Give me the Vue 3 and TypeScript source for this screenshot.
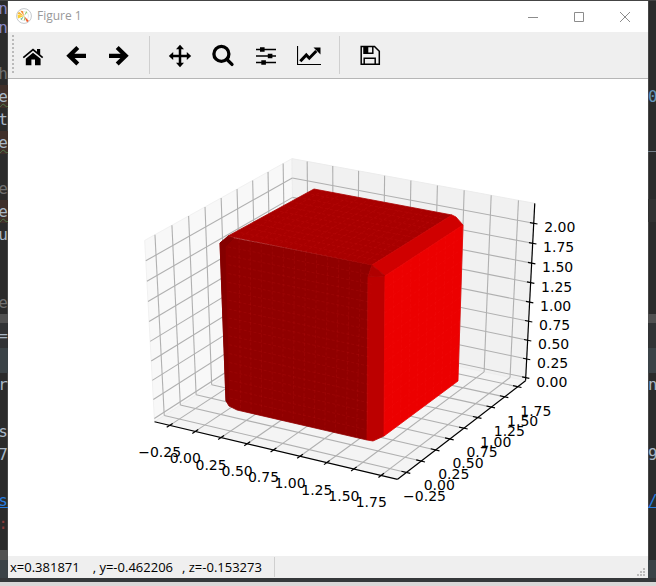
<script setup lang="ts">
type Pt = [number, number]
type Vec = [number, number, number]
interface Line { a: Pt; b: Pt }
interface Label { x: number; y: number; text: string }
interface Row { h: number; text?: string; tone?: string }

// Camera of the 3D axes (unit cube, perspective distance 10)
const azim = (-60.5 * Math.PI) / 180
const elev = (30 * Math.PI) / 180
const dist = 10

function project([x, y, z]: Vec): Pt {
  const [px, py, pz] = [x - 0.5, y - 0.5, z - 0.5]
  const ca = Math.cos(azim), sa = Math.sin(azim)
  const ce = Math.cos(elev), se = Math.sin(elev)
  const right = -sa * px + ca * py
  const up = -ca * se * px - sa * se * py + ce * pz
  const depth = dist - (ca * ce * px + sa * ce * py + se * pz)
  return [335 + (2790 * right) / depth, 234.5 - (2070 * up) / depth]
}

const step = 0.1088
const xyTicks = [-0.25, 0, 0.25, 0.5, 0.75, 1, 1.25, 1.5, 1.75]
const zTicks = [0, 0.25, 0.5, 0.75, 1, 1.25, 1.5, 1.75, 2]
const xyPos = xyTicks.map((_, i) => 0.065 + i * step)
const zPos = zTicks.map((_, i) => 0.019 + i * 0.1092)
const fmt = (v: number) => (v < 0 ? '\u2212' : '') + Math.abs(v).toFixed(2)
const points = (list: Pt[]) => list.map((p) => p.join(',')).join(' ')
const line = (a: Vec, b: Vec): Line => ({ a: project(a), b: project(b) })

const panes = [
  { cls: 'pane-left', pts: points(([[0, 0, 0], [0, 1, 0], [0, 1, 1], [0, 0, 1]] as Vec[]).map(project)) },
  { cls: 'pane-back', pts: points(([[0, 1, 0], [1, 1, 0], [1, 1, 1], [0, 1, 1]] as Vec[]).map(project)) },
  { cls: 'pane-floor', pts: points(([[0, 0, 0], [1, 0, 0], [1, 1, 0], [0, 1, 0]] as Vec[]).map(project)) },
]

const grid: Line[] = [
  ...xyPos.flatMap((t) => [
    line([t, 0, 0], [t, 1, 0]),
    line([t, 1, 0], [t, 1, 1]),
    line([0, t, 0], [1, t, 0]),
    line([0, t, 0], [0, t, 1]),
  ]),
  ...zPos.flatMap((t) => [line([0, 0, t], [0, 1, t]), line([0, 1, t], [1, 1, t])]),
]

const axes: Line[] = [
  line([0, 0, 0], [1, 0, 0]),
  line([1, 0, 0], [1, 1, 0]),
  line([1, 1, 0], [1, 1, 1]),
]

const ticks: Line[] = [
  ...xyPos.map((t) => line([t, -0.02, 0], [t, 0.02, 0])),
  ...xyPos.map((t) => line([0.98, t, 0], [1.015, t, 0])),
  ...zPos.map((t) => line([0.985, 1, t], [1.015, 1, t])),
]

const labelAt = (p: Vec, dx: number, dy: number, v: number): Label => {
  const [x, y] = project(p)
  return { x: x + dx, y: y + dy, text: fmt(v) }
}
const labels: Label[] = [
  ...xyTicks.map((v, i) => labelAt([xyPos[i], 0, 0], -10, 32, v)),
  ...xyTicks.map((v, i) => labelAt([1, xyPos[i], 0], 18, 29, v)),
  ...zTicks.map((v, i) => labelAt([1, 1, zPos[i]], 26, 9, v)),
]

// Faces of the rounded solid
const faces: { cls: string; pts: Pt[] }[] = [
  { cls: 'face front', pts: [[212, 164], [220, 158], [364, 186], [360, 198], [359, 361], [229, 331], [221, 327], [218, 322]] },
  { cls: 'face edge', pts: [[212, 164], [217, 162], [221, 324], [218, 322]] },
  { cls: 'face edge', pts: [[212, 164], [220, 157], [226, 159], [217, 168]] },
  { cls: 'face top', pts: [[220, 157], [306, 110], [444, 136], [364, 186]] },
  { cls: 'face ridge', pts: [[444, 136], [448, 138], [455, 146], [377, 197], [364, 186]] },
  { cls: 'face bevel', pts: [[360, 198], [377, 197], [376, 357], [365, 362], [359, 361]] },
  { cls: 'face corner', pts: [[364, 186], [377, 197], [360, 198]] },
  { cls: 'face side', pts: [[377, 197], [455, 146], [450, 302], [376, 357]] },
]

// Faint seams left by the triangulated mesh
function seams(q: Pt[], nu: number, nv: number): Line[] {
  const at = (u: number, v: number): Pt => [0, 1].map((k) =>
    (q[0][k] * (1 - u) + q[1][k] * u) * (1 - v) + (q[3][k] * (1 - u) + q[2][k] * u) * v) as Pt
  const out: Line[] = []
  for (let i = 1; i < nu; i++) out.push({ a: at(i / nu, 0), b: at(i / nu, 1) })
  for (let j = 1; j < nv; j++) out.push({ a: at(0, j / nv), b: at(1, j / nv) })
  return out
}
const mesh: Line[] = [
  ...seams([[220, 159], [364, 187], [359, 360], [222, 328]], 13, 19),
  ...seams([[220, 157], [306, 110], [444, 136], [364, 186]], 11, 15),
  ...seams([[377, 197], [455, 146], [450, 302], [376, 357]], 9, 13),
]

const leftRows: Row[] = [
  { h: 15, text: 'n', tone: 'purple' }, { h: 23, text: 'n', tone: 'purple' }, { h: 23 },
  { h: 23, text: 'h', tone: 'grey' }, { h: 23, text: 'e', tone: 'warn' }, { h: 23, text: 't' },
  { h: 23, text: 'e', tone: 'warn' }, { h: 23 }, { h: 23, text: 'e', tone: 'grey' },
  { h: 23, text: 'e', tone: 'warn' }, { h: 23, text: 'u' }, { h: 23 }, { h: 23 },
  { h: 22, text: 'e', tone: 'grey' }, { h: 9, tone: 'bar' }, { h: 25, text: '=', tone: 'head' },
  { h: 25, tone: 'tab' }, { h: 24, text: 'or' }, { h: 23 }, { h: 23, text: 's' }, { h: 23, text: '47' },
  { h: 23 }, { h: 23, text: 's', tone: 'link' }, { h: 23, text: ':', tone: 'red' }, { h: 15 },
  { h: 10, tone: 'bar' }, { h: 18, tone: 'tab' },
]
const rightRows: Row[] = [
  { h: 84 }, { h: 23, text: '0', tone: 'blue' }, { h: 23 }, { h: 23, text: '_' }, { h: 45 },
  { h: 23, tone: 'current' }, { h: 92 }, { h: 9, tone: 'bar' }, { h: 25, tone: 'head' },
  { h: 25, tone: 'tab' }, { h: 24, text: 'n' }, { h: 46 }, { h: 23, text: '9' }, { h: 23 },
  { h: 23, text: '/', tone: 'link' }, { h: 48 }, { h: 18, tone: 'tab' },
]
</script>

<template>
  <div class="desktop">
    <div class="gutter left" aria-hidden="true">
      <div v-for="(r, i) in leftRows" :key="i" class="row" :class="r.tone" :style="{ height: r.h + 'px' }"><span>{{ r.text }}</span></div>
    </div>

    <main class="window">
      <header class="titlebar">
        <svg class="logo" viewBox="0 0 16 16" aria-hidden="true">
          <circle cx="8" cy="8" r="7.4" fill="#fff" stroke="#c4c8cc" />
          <circle cx="8" cy="8" r="4.5" fill="none" stroke="#dde1e3" stroke-width=".7" />
          <path d="M8 8L1.5 5.8 3 3.8z" fill="#f7b733" />
          <path d="M8 8L2 10.5 1.5 6.5z" fill="#fbcf35" />
          <path d="M8 8L4.2 2.4 7 3.2z" fill="#f68b2c" />
          <path d="M8 8L12.8 12.8 11 14.2z" fill="#f05a28" />
          <path d="M8 8L10.2 3.2 11.4 4.2z" fill="#8fc866" />
          <path d="M8 8L5.5 12 4.5 11z" fill="#63b47c" />
          <path d="M8 8L8 12.5 9.3 12z" fill="#9bd36c" />
        </svg>
        <h1>Figure 1</h1>
        <button class="wbtn" aria-label="Minimize"><svg viewBox="0 0 12 12"><path d="M1 6.5h10" /></svg></button>
        <button class="wbtn" aria-label="Maximize"><svg viewBox="0 0 12 12"><path d="M1.5 1.5h9v9h-9z" /></svg></button>
        <button class="wbtn" aria-label="Close"><svg viewBox="0 0 12 12"><path d="M1 1l10 10M11 1L1 11" /></svg></button>
      </header>

      <nav class="toolbar" aria-label="Plot tools">
        <span class="grip"></span>
        <button class="tool" aria-label="Home">
          <svg viewBox="0 0 24 24">
            <path d="M4.8 14.8L12 8.800l7.600 6V21.200H14V15.500h-3.600v5.700H4.800z" />
            <path d="M16 5h3.200v6.500L16 8.800z" />
            <path d="M2.300 13.600L12 5.700l9.700 7.900" class="stroke" stroke-width="1.700" />
          </svg>
        </button>
        <button class="tool" aria-label="Back">
          <svg viewBox="0 0 24 24"><path d="M13.800 3.500L5.300 11.800l8.500 8.300M6 11.800h16" class="stroke" stroke-width="4.200" /></svg>
        </button>
        <button class="tool" aria-label="Forward">
          <svg viewBox="0 0 24 24"><path d="M10.200 3.500l8.500 8.300-8.500 8.300M18 11.800H2" class="stroke" stroke-width="4.200" /></svg>
        </button>
        <span class="sep"></span>
        <button class="tool" aria-label="Pan">
          <svg viewBox="0 0 24 24">
            <path d="M12 3v18M3 12h18" class="stroke" stroke-width="2.500" />
            <path d="M12 .8l4 4.400H8zM12 23.200l4-4.400H8zM.8 12l4.400-4v8zM23.200 12l-4.400-4v8z" />
          </svg>
        </button>
        <button class="tool" aria-label="Zoom">
          <svg viewBox="0 0 24 24">
            <circle cx="10.400" cy="9.900" r="7.500" class="stroke" stroke-width="3.300" />
            <path d="M15.700 15.200l5.300 5.200" class="stroke" stroke-width="3.300" stroke-linecap="round" />
          </svg>
        </button>
        <button class="tool" aria-label="Configure subplots">
          <svg viewBox="0 0 24 24">
            <path d="M2 5.500h20M2 12h20M2 18.500h20" class="stroke" stroke-width="1.500" />
            <path d="M6 3.300h4.600v4.400H6zM13.800 9.800h4.600v4.400h-4.600zM7.300 16.300h4.600v4.400H7.300z" />
          </svg>
        </button>
        <button class="tool" aria-label="Edit axis">
          <svg viewBox="0 0 24 24">
            <path d="M.5 2v18.500H24" class="stroke" stroke-width="1.200" />
            <path d="M3.300 17.300l6-6.300 3 3.200 7-7.200" class="stroke" stroke-width="3" />
            <path d="M16.500 3.500h7v7z" />
          </svg>
        </button>
        <span class="sep"></span>
        <button class="tool" aria-label="Save">
          <svg viewBox="0 0 24 24">
            <path d="M3.200 2.500h13.300l4.800 4.800v13H3.200zM6.200 20.300v-6h11v6M6 3v6.300h8.800V3" class="stroke" stroke-width="1.500" />
            <path d="M6 3h4.300v6H6z" />
          </svg>
        </button>
      </nav>

      <svg class="plot" viewBox="0 0 640 477" role="img" aria-label="3D plot of a red rounded cube">
        <polygon v-for="p in panes" :key="p.cls" :points="p.pts" :class="p.cls" />
        <line v-for="(l, i) in grid" :key="'g' + i" class="grid" :x1="l.a[0]" :y1="l.a[1]" :x2="l.b[0]" :y2="l.b[1]" />
        <line v-for="(l, i) in axes" :key="'a' + i" class="axis" :x1="l.a[0]" :y1="l.a[1]" :x2="l.b[0]" :y2="l.b[1]" />
        <line v-for="(l, i) in ticks" :key="'t' + i" class="axis" :x1="l.a[0]" :y1="l.a[1]" :x2="l.b[0]" :y2="l.b[1]" />
        <polygon v-for="(f, i) in faces" :key="'f' + i" :points="points(f.pts)" :class="f.cls" />
        <line v-for="(l, i) in mesh" :key="'m' + i" class="mesh" :x1="l.a[0]" :y1="l.a[1]" :x2="l.b[0]" :y2="l.b[1]" />
        <text v-for="(t, i) in labels" :key="'l' + i" :x="t.x" :y="t.y">{{ t.text }}</text>
      </svg>

      <footer class="status">
        <span class="coord">x=0.381871</span>
        <span class="coord">, y=-0.462206</span>
        <span class="coord">, z=-0.153273</span>
        <svg class="resize" viewBox="0 0 9 9" aria-hidden="true">
          <path d="M6 0h2v2H6zM3 3h2v2H3zM6 3h2v2H6zM0 6h2v2H0zM3 6h2v2H3zM6 6h2v2H6z" />
        </svg>
      </footer>
    </main>

    <div class="gutter right" aria-hidden="true">
      <div v-for="(r, i) in rightRows" :key="i" class="row" :class="r.tone" :style="{ height: r.h + 'px' }"><span>{{ r.text }}</span></div>
    </div>
  </div>
</template>

<style>
body { margin: 0; }
</style>

<style scoped>
.desktop {
  box-sizing: border-box;
  display: grid;
  grid-template-columns: 8px minmax(0, 1fr) 8px;
  min-height: 100vh;
  padding: 1px 0 8px;
  background: linear-gradient(to top, #d9d7d7 4px, #35383a 4px, #35383a 9px, #444 9px);
}
.gutter { overflow: hidden; background: #2b2b2b; }
.row {
  display: flex;
  align-items: center;
  color: #a9b7c6;
  font: 16px/20px "DejaVu Sans Mono", monospace;
  white-space: pre;
}
.left .row { justify-content: flex-end; }
.left { box-shadow: inset -1px 0 #454545; }
.right { box-shadow: inset 1px 0 #454545; }
.purple { color: #8888c6; }
.grey { color: #707070; }
.warn { background: #40302a; }
.warn span { text-decoration: underline wavy #4f7a4a 1px; }
.blue { color: #6897bb; }
.red { color: #8c3b3b; }
.link { color: #287bde; }
.link span { text-decoration: underline; }
.bar { background: #515151; }
.head { background: #313335; }
.tab { background: #3b4347; }
.current { background: #323232; }

.window { display: flex; flex-direction: column; background: #fff; }
.titlebar { display: flex; align-items: center; height: 31px; padding-left: 8px; }
.logo { width: 16px; height: 16px; margin-right: 5px; }
h1 {
  flex: 1;
  margin: 0;
  color: #999;
  font: 12px/16px "Open Sans", sans-serif;
}
button { padding: 0; border: 0; background: none; }
.wbtn { display: grid; place-items: center; width: 46px; height: 30px; }
.wbtn svg { width: 12px; height: 12px; fill: none; stroke: #8c8c8c; }
.titlebar > .logo, .titlebar > h1 { margin-bottom: 1px; }

.toolbar {
  display: flex;
  align-items: center;
  gap: 9px;
  height: 46px;
  border-bottom: 1px solid #b6b6b6;
  background: #efefef;
}
.grip {
  width: 2px;
  height: 40px;
  margin: 0 -7px 0 4px;
  background: repeating-linear-gradient(#bababa 0 2px, transparent 2px 4px);
}
.tool { display: grid; place-items: center; width: 34px; height: 36px; padding-top: 2px; }
.tool svg { width: 24px; height: 24px; fill: #000; }
.tool .stroke { fill: none; stroke: #000; }
.sep { width: 1px; height: 38px; margin: 0 4px; background: #cfcfcf; }

.plot { display: block; flex: 1; width: 100%; min-height: 0; }
.pane-left { fill: #f8f8f8; stroke: #f1f1f1; }
.pane-back { fill: #f1f1f1; stroke: #ececec; }
.pane-floor { fill: #f4f4f4; stroke: #eee; }
.grid { stroke: #b0b0b0; stroke-width: 1.1; }
.axis { stroke: #000; stroke-width: 1.2; }
.plot text { font: 14px "DejaVu Sans", sans-serif; text-anchor: middle; }
.face { stroke-width: .8; stroke-linejoin: round; }
.front { fill: #900000; stroke: #900000; }
.edge { fill: #850000; stroke: #850000; }
.top { fill: #a80000; stroke: #a80000; }
.ridge { fill: #d00000; stroke: #d00000; }
.corner { fill: #b00000; stroke: #b00000; }
.bevel { fill: #bc0000; stroke: #bc0000; }
.side { fill: #ec0000; stroke: #ec0000; }
.mesh { stroke: #f33; stroke-width: 1; stroke-opacity: .09; stroke-dasharray: 3 2; }

.status {
  display: flex;
  align-items: center;
  height: 22px;
  background: #efefef;
  color: #000;
  font: 13px/16px "Open Sans", sans-serif;
}
.coord { padding: 2px 0 2px 2px; margin-right: 11px; }
.coord:nth-child(2) { margin-right: 7px; }
.coord:nth-child(3) { padding-right: 12px; border-right: 1px solid #cfcfcf; }
.resize { width: 9px; height: 9px; margin: 10px 2px 0 auto; fill: #bcbcbc; }
</style>
